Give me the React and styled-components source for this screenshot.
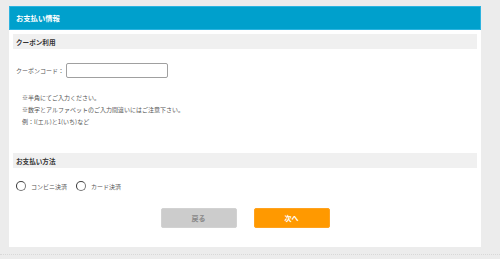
import React, { useState } from 'react';
import styled, { createGlobalStyle } from 'styled-components';

const GlobalStyle = createGlobalStyle`
  html, body {
    margin: 0;
    padding: 0;
    background: #ececec;
  }
  body {
    font-family: "Noto Sans CJK JP", "Noto Sans", sans-serif;
    color: #444;
  }
`;

const Page = styled.div`
  padding: 6px 0 0 9px;
  width: 472px;
`;

const Panel = styled.div`
  background: #fff;
  height: 241px;
  display: flex;
  flex-direction: column;
`;

const PanelHeader = styled.div`
  height: 24px;
  box-sizing: border-box;
  background: #00a0cc;
  border: 1px solid #2cb3df;
  color: #fff;
  font-size: 7.3px;
  font-weight: bold;
  display: flex;
  align-items: center;
  padding-left: 6px;
`;

const PanelBody = styled.div`
  padding: 4px 4px 0;
  display: flex;
  flex-direction: column;
`;

const SectionTitle = styled.div`
  height: 15px;
  background: #f0f0f0;
  color: #333;
  font-size: 6.6px;
  font-weight: bold;
  display: flex;
  align-items: center;
  padding-left: 3px;
  margin-top: ${(p) => p.$top || 0}px;
`;

const CouponRow = styled.div`
  display: flex;
  align-items: center;
  margin-top: 14px;
  padding-left: 3px;
  font-size: 6px;
  color: #555;
`;

const CouponInput = styled.input`
  width: 102px;
  height: 15px;
  box-sizing: border-box;
  border: 1px solid #a0a0a0;
  border-radius: 2px;
  margin-left: 2px;
  padding: 0 3px;
  font-size: 7px;
  outline: none;
`;

const Notes = styled.div`
  margin-top: 14px;
  padding-left: 9px;
  font-size: 6px;
  line-height: 12px;
  color: #555;
`;

const RadioRow = styled.div`
  display: flex;
  align-items: center;
  gap: 9px;
  margin-top: 13px;
  padding-left: 3px;
  height: 10px;
`;

const RadioLabel = styled.label`
  display: flex;
  align-items: center;
  gap: 5px;
  font-size: 6px;
  color: #555;
  cursor: pointer;
`;

const RadioCircle = styled.span`
  width: 8px;
  height: 8px;
  border-radius: 50%;
  border: 1px solid #777;
  border-left-color: #333;
  border-top-color: #444;
  background: ${(p) => (p.$checked ? 'radial-gradient(circle, #333 0 2px, #fff 2.5px)' : '#fff')};
`;

const ButtonRow = styled.div`
  display: flex;
  justify-content: center;
  gap: 17px;
  margin-top: 17px;
`;

const Button = styled.button`
  width: 76px;
  height: 20px;
  border: 1px solid ${(p) => (p.$primary ? '#ffa21f' : '#d2d2d2')};
  border-radius: 2px;
  background: ${(p) => (p.$primary ? '#ff9900' : '#cccccc')};
  color: ${(p) => (p.$primary ? '#fff' : '#888')};
  font-family: inherit;
  font-size: 7px;
  font-weight: bold;
  padding: 0;
  cursor: pointer;
`;

const FooterLine = styled.div`
  margin-top: 7px;
  margin-left: -9px;
  width: 500px;
  border-top: 1px dotted #d8d8d8;
`;

export default function App() {
  const [coupon, setCoupon] = useState('');
  const [method, setMethod] = useState('');

  return (
    <Page>
      <GlobalStyle />
      <Panel>
        <PanelHeader>お支払い情報</PanelHeader>
        <PanelBody>
          <SectionTitle>クーポン利用</SectionTitle>
          <CouponRow>
            クーポンコード：
            <CouponInput value={coupon} onChange={(e) => setCoupon(e.target.value)} />
          </CouponRow>
          <Notes>
            <div>※半角にてご入力ください。</div>
            <div>※数字とアルファベットのご入力間違いにはご注意下さい。</div>
            <div>例：l(エル)と1(いち)など</div>
          </Notes>
          <SectionTitle $top={25}>お支払い方法</SectionTitle>
          <RadioRow>
            <RadioLabel onClick={() => setMethod('conv')}>
              <RadioCircle $checked={method === 'conv'} />
              コンビニ決済
            </RadioLabel>
            <RadioLabel onClick={() => setMethod('card')}>
              <RadioCircle $checked={method === 'card'} />
              カード決済
            </RadioLabel>
          </RadioRow>
          <ButtonRow>
            <Button>戻る</Button>
            <Button $primary>次へ</Button>
          </ButtonRow>
        </PanelBody>
      </Panel>
      <FooterLine />
    </Page>
  );
}
